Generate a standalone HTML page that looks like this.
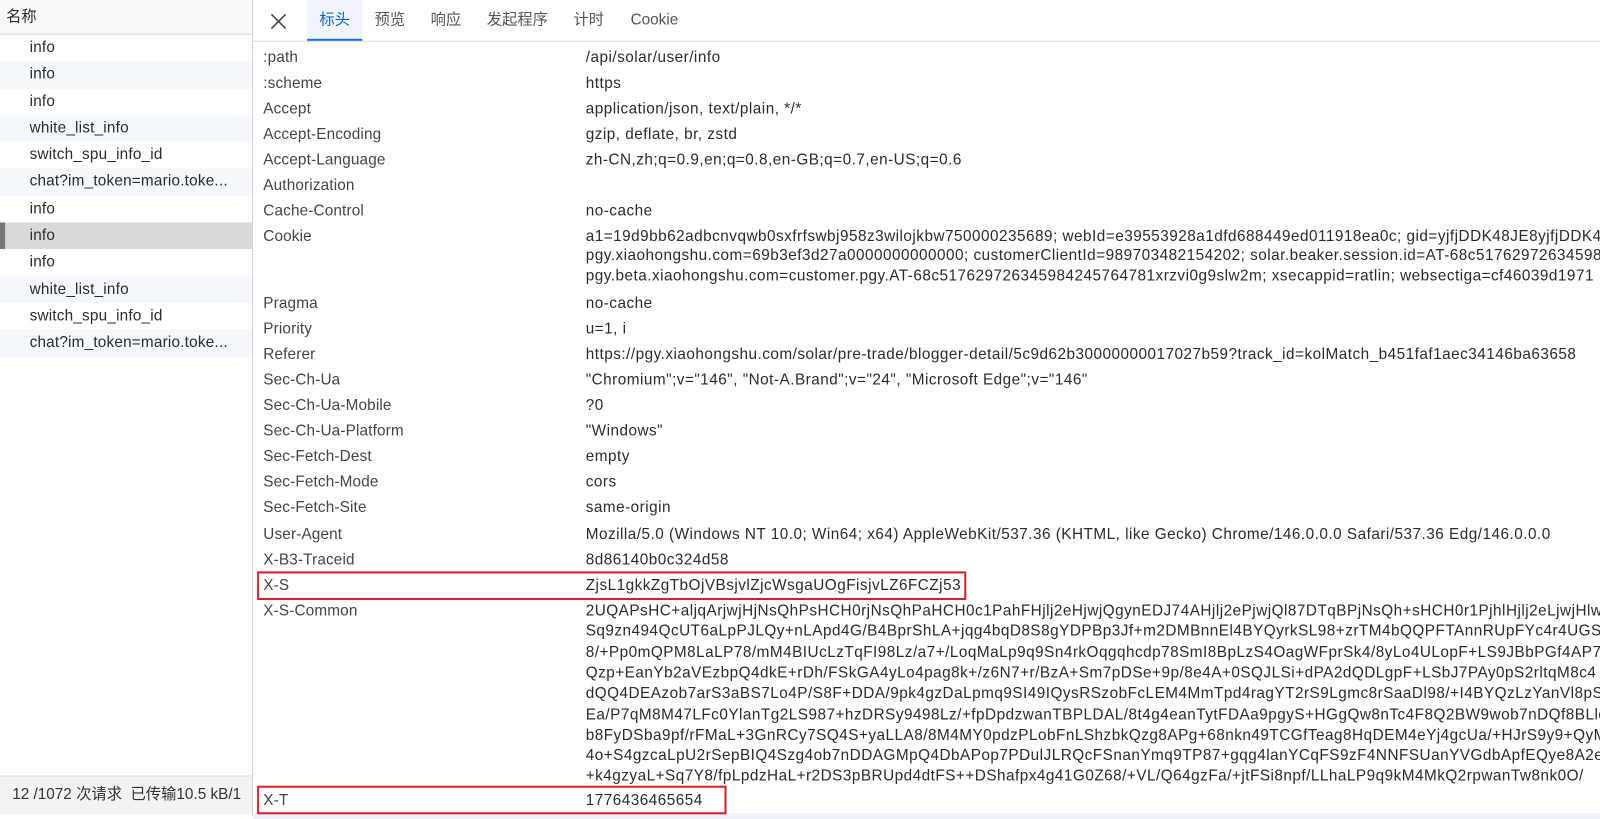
<!DOCTYPE html>
<html><head><meta charset="utf-8"><style>
*{margin:0;padding:0;box-sizing:border-box}
body{width:1600px;height:815px;overflow:hidden;background:#fff;font-family:"Liberation Sans","Noto Sans CJK SC",sans-serif;color:#2b2b2b;position:relative}
#wrap{position:absolute;left:0;top:0;width:1568px;height:800px;transform:scale(1.0204);transform-origin:0 0}
#left{position:absolute;left:0;top:0;width:248px;height:800px;border-right:1px solid #d0d0d0;background:#fff}
#lh{height:34px;border-bottom:1px solid #e0e0e0;background:#f8f9fb;font-size:15px;line-height:34px;padding-left:6px}
.li{height:26.3px;line-height:26px;font-size:15px;padding-left:29px;letter-spacing:0.2px}
.li:nth-child(odd){background:#f4f7fb}
.sel{background:#d9d9d9!important;border-left:5px solid #777;padding-left:24px}
#status{position:absolute;left:0;top:760px;width:247px;height:38px;background:#f3f3f3;border-top:1px solid #ddd;font-size:15px;line-height:36px;padding-left:12px;white-space:nowrap;overflow:hidden;color:#333}
#tabs{position:absolute;left:248px;top:0;right:0;height:41px;border-bottom:1px solid #ddd;background:#fff}
.tab{position:absolute;top:0;height:40px;line-height:40px;font-size:15px;color:#555}
.tab.a{color:#1565c0;background:#f0f5fc;border-bottom:2px solid #1a73e8;padding:0 12px}
.r{position:absolute;white-space:nowrap;font-size:15px;line-height:20px;letter-spacing:0.48px}
.k{left:258px;color:#444;letter-spacing:0.15px}
.v{left:574px;right:0;overflow:hidden}
.box{position:absolute;border:2px solid #d0212e}
</style></head><body>
<div id="wrap">
<div id="left">
<div id="lh">名称</div>
<div class="li">info</div>
<div class="li">info</div>
<div class="li">info</div>
<div class="li">white_list_info</div>
<div class="li">switch_spu_info_id</div>
<div class="li">chat?im_token=mario.toke...</div>
<div class="li">info</div>
<div class="li sel">info</div>
<div class="li">info</div>
<div class="li">white_list_info</div>
<div class="li">switch_spu_info_id</div>
<div class="li">chat?im_token=mario.toke...</div>
<div class="li" style="background:#fff"></div>
</div>
<div id="status">12 /1072 次请求 &nbsp;已传输10.5 kB/1</div>
<div id="tabs">
<svg style="position:absolute;left:16px;top:12px" width="18" height="18" viewBox="0 0 18 18"><path d="M2 2L16 16M16 2L2 16" stroke="#444" stroke-width="1.5"/></svg>
<div class="tab a" style="left:53px">标头</div>
<div class="tab" style="left:119px">预览</div>
<div class="tab" style="left:174px">响应</div>
<div class="tab" style="left:229px">发起程序</div>
<div class="tab" style="left:314px">计时</div>
<div class="tab" style="left:370px">Cookie</div>
</div>

<div class="r k" style="top:47px">:path</div><div class="r v" style="top:47px">/api/solar/user/info</div>
<div class="r k" style="top:72px">:scheme</div><div class="r v" style="top:72px">https</div>
<div class="r k" style="top:97px">Accept</div><div class="r v" style="top:97px">application/json, text/plain, */*</div>
<div class="r k" style="top:122px">Accept-Encoding</div><div class="r v" style="top:122px">gzip, deflate, br, zstd</div>
<div class="r k" style="top:147px">Accept-Language</div><div class="r v" style="top:147px">zh-CN,zh;q=0.9,en;q=0.8,en-GB;q=0.7,en-US;q=0.6</div>
<div class="r k" style="top:172px">Authorization</div>
<div class="r k" style="top:197px">Cache-Control</div><div class="r v" style="top:197px">no-cache</div>
<div class="r k" style="top:222px">Cookie</div>
<div class="r v" style="top:222px">a1=19d9bb62adbcnvqwb0sxfrfswbj958z3wilojkbw750000235689; webId=e39553928a1dfd688449ed011918ea0c; gid=yjfjDDK48JE8yjfjDDK48JE8</div>
<div class="r v" style="top:241px">pgy.xiaohongshu.com=69b3ef3d27a0000000000000; customerClientId=989703482154202; solar.beaker.session.id=AT-68c517629726345984</div>
<div class="r v" style="top:261px">pgy.beta.xiaohongshu.com=customer.pgy.AT-68c517629726345984245764781xrzvi0g9slw2m; xsecappid=ratlin; websectiga=cf46039d1971</div>
<div class="r k" style="top:288px">Pragma</div><div class="r v" style="top:288px">no-cache</div>
<div class="r k" style="top:313px">Priority</div><div class="r v" style="top:313px">u=1, i</div>
<div class="r k" style="top:338px">Referer</div><div class="r v" style="top:338px">https://pgy.xiaohongshu.com/solar/pre-trade/blogger-detail/5c9d62b30000000017027b59?track_id=kolMatch_b451faf1aec34146ba63658</div>
<div class="r k" style="top:363px">Sec-Ch-Ua</div><div class="r v" style="top:363px">"Chromium";v="146", "Not-A.Brand";v="24", "Microsoft Edge";v="146"</div>
<div class="r k" style="top:388px">Sec-Ch-Ua-Mobile</div><div class="r v" style="top:388px">?0</div>
<div class="r k" style="top:413px">Sec-Ch-Ua-Platform</div><div class="r v" style="top:413px">"Windows"</div>
<div class="r k" style="top:438px">Sec-Fetch-Dest</div><div class="r v" style="top:438px">empty</div>
<div class="r k" style="top:463px">Sec-Fetch-Mode</div><div class="r v" style="top:463px">cors</div>
<div class="r k" style="top:488px">Sec-Fetch-Site</div><div class="r v" style="top:488px">same-origin</div>
<div class="r k" style="top:514px">User-Agent</div><div class="r v" style="top:514px">Mozilla/5.0 (Windows NT 10.0; Win64; x64) AppleWebKit/537.36 (KHTML, like Gecko) Chrome/146.0.0.0 Safari/537.36 Edg/146.0.0.0</div>
<div class="r k" style="top:539px">X-B3-Traceid</div><div class="r v" style="top:539px">8d86140b0c324d58</div>
<div class="r k" style="top:564px">X-S</div><div class="r v" style="top:564px">ZjsL1gkkZgTbOjVBsjvlZjcWsgaUOgFisjvLZ6FCZj53</div>
<div class="r k" style="top:589px">X-S-Common</div>
<div class="r v" style="top:589px">2UQAPsHC+aljqArjwjHjNsQhPsHCH0rjNsQhPaHCH0c1PahFHjlj2eHjwjQgynEDJ74AHjlj2ePjwjQl87DTqBPjNsQh+sHCH0r1PjhlHjlj2eLjwjHlwr</div>
<div class="r v" style="top:609px">Sq9zn494QcUT6aLpPJLQy+nLApd4G/B4BprShLA+jqg4bqD8S8gYDPBp3Jf+m2DMBnnEl4BYQyrkSL98+zrTM4bQQPFTAnnRUpFYc4r4UGSGl</div>
<div class="r v" style="top:630px">8/+Pp0mQPM8LaLP78/mM4BIUcLzTqFI98Lz/a7+/LoqMaLp9q9Sn4rkOqgqhcdp78SmI8BpLzS4OagWFprSk4/8yLo4ULopF+LS9JBbPGf4AP7l</div>
<div class="r v" style="top:650px">Qzp+EanYb2aVEzbpQ4dkE+rDh/FSkGA4yLo4pag8k+/z6N7+r/BzA+Sm7pDSe+9p/8e4A+0SQJLSi+dPA2dQDLgpF+LSbJ7PAy0pS2rltqM8c4</div>
<div class="r v" style="top:670px">dQQ4DEAzob7arS3aBS7Lo4P/S8F+DDA/9pk4gzDaLpmq9SI49IQysRSzobFcLEM4MmTpd4ragYT2rS9Lgmc8rSaaDl98/+I4BYQzLzYanVl8pSM</div>
<div class="r v" style="top:691px">Ea/P7qM8M47LFc0YlanTg2LS987+hzDRSy9498Lz/+fpDpdzwanTBPLDAL/8t4g4eanTytFDAa9pgyS+HGgQw8nTc4F8Q2BW9wob7nDQf8BLlq</div>
<div class="r v" style="top:711px">b8FyDSba9pf/rFMaL+3GnRCy7SQ4S+yaLLA8/8M4MY0pdzPLobFnLShzbkQzg8APg+68nkn49TCGfTeag8HqDEM4eYj4gcUa/+HJrS9y9+QyM</div>
<div class="r v" style="top:731px">4o+S4gzcaLpU2rSepBIQ4Szg4ob7nDDAGMpQ4DbAPop7PDulJLRQcFSnanYmq9TP87+gqg4lanYCqFS9zF4NNFSUanYVGdbApfEQye8A2eDN</div>
<div class="r v" style="top:751px">+k4gzyaL+Sq7Y8/fpLpdzHaL+r2DS3pBRUpd4dtFS++DShafpx4g41G0Z68/+VL/Q64gzFa/+jtFSi8npf/LLhaLP9q9kM4MkQ2rpwanTw8nk0O/</div>
<div class="r k" style="top:775px">X-T</div><div class="r v" style="top:775px">1776436465654</div>
<div style="position:absolute;left:248px;right:0;top:797px;height:6px;background:#eef2f8"></div>
<div class="box" style="left:252px;top:560px;width:695px;height:28px"></div>
<div class="box" style="left:252px;top:770px;width:460px;height:28px"></div>
</div>
</body></html>
